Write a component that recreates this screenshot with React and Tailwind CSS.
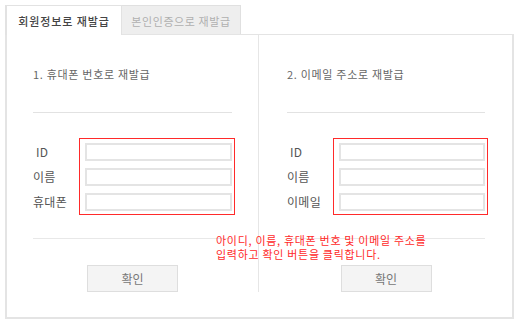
import React from "react";

const font = { fontFamily: '"Noto Sans CJK KR", "Noto Sans", sans-serif' };

function Column({ title, labels, pl, pr, border }) {
  return (
    <div className={`flex flex-col ${border ? "border-r border-[#e6e6e6]" : ""} ${pl} ${pr} pt-[31px] w-[252px] shrink-0`}>
      <div className="text-[11px] leading-[16px] text-[#666] h-[16px] tracking-[0.7px]">{title}</div>
      <div className="mt-[30px] h-px bg-[#e2e2e2]" />
      <div className="mt-[25px] flex">
        <div className="w-[46px] flex flex-col pt-[5px] gap-[7px]">
          {labels.map((l, i) => (
            <div key={i} className={`h-[18px] flex items-center text-[12px] text-[#555] tracking-[0.3px] ${l === "ID" ? "pl-[3px]" : ""}`}>{l}</div>
          ))}
        </div>
        <div className="w-[157px] -mr-[3px] border border-[#ff2a2a] pt-[4px] pb-[3px] pl-[5px] pr-[2px] flex flex-col gap-[7px]">
          {labels.map((l, i) => (
            <div key={i} className="h-[18px] border-2 border-[#e4e4e4] bg-white" />
          ))}
        </div>
      </div>
      <div className="mt-[23px] h-px bg-[#e8e8e8]" />
      <div className="mt-[26px] flex justify-center">
        <div className="w-[91px] h-[27px] bg-[#f4f4f4] border border-[#dedede] flex items-center justify-center text-[12px] text-[#777]">확인</div>
      </div>
    </div>
  );
}

export default function App() {
  return (
    <div className="w-[520px] h-[323px] bg-white relative pl-[5px] pt-[5px]" style={font}>
      <div className="flex h-[30px] relative z-10">
        <div className="w-[117px] h-[30px] bg-white border-l-2 border-t border-r border-[#e2e2e2] flex items-center justify-center text-[11px] text-[#444] font-medium pt-[2px] tracking-[0.9px]">회원정보로 재발급</div>
        <div className="w-[119px] h-[29px] bg-[#eeeeee] border-t border-r border-[#e0e0e0] flex items-center justify-center text-[11px] text-[#b0b0b0] pt-[2px] tracking-[0.6px]">본인인증으로 재발급</div>
      </div>
      <div className="w-[509px] h-[285px] -mt-px border-2 border-t border-[#e4e4e4] flex pb-[25px]">
        <Column
          title="1. 휴대폰 번호로 재발급"
          labels={["ID", "이름", "휴대폰"]}
          pl="pl-[26px]"
          pr="pr-[26px]"
          border
        />
        <Column
          title="2. 이메일 주소로 재발급"
          labels={["ID", "이름", "이메일"]}
          pl="pl-[28px]"
          pr="pr-[26px]"
        />
      </div>
      <div className="absolute left-[216px] top-[233px] text-[11px] leading-[14px] text-[#ff2a2a] tracking-[0.7px]">
        아이디, 이름, 휴대폰 번호 및 이메일 주소를<br />입력하고 확인 버튼을 클릭합니다.
      </div>
    </div>
  );
}
